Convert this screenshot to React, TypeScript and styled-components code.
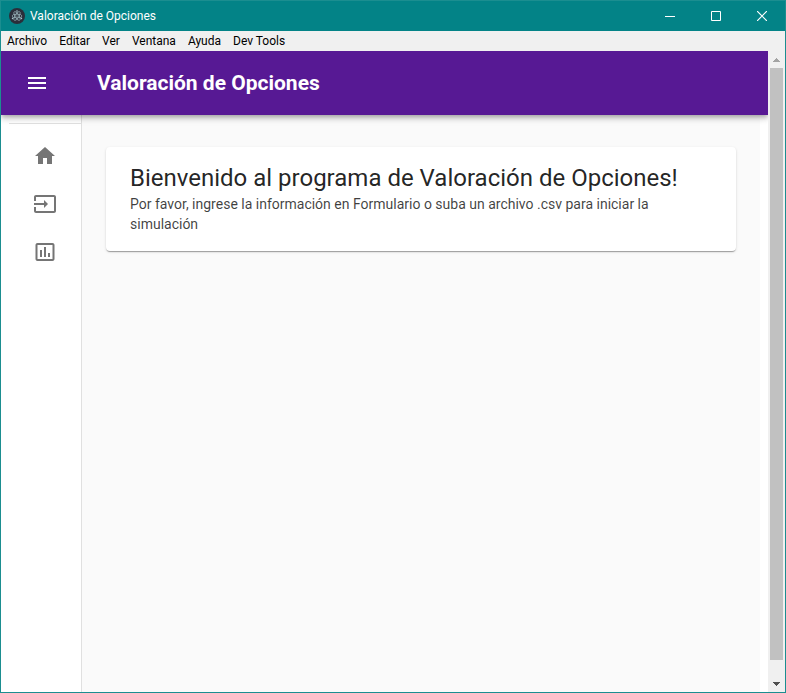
import React from "react";
import styled, { createGlobalStyle } from "styled-components";

const GlobalStyle = createGlobalStyle`
  *, *::before, *::after { box-sizing: border-box; }
  body { margin: 0; font-family: Roboto, sans-serif; }
  button { border: 0; padding: 0; margin: 0; background: transparent; font: inherit; color: inherit; }
`;

const Window = styled.div`
  display: flex;
  flex-direction: column;
  height: 100vh;
  border: 1px solid #1b8e90;
  overflow: hidden;
`;

const TitleBar = styled.header`
  display: flex;
  align-items: center;
  flex: none;
  height: 30px;
  padding-left: 8px;
  background: #038387;
  color: #fff;
  font: 12px/16px Roboto, sans-serif;
`;

const WindowTitle = styled.span`
  flex: 1;
  margin-left: 5px;
`;

const CaptionButton = styled.button`
  display: grid;
  place-items: center;
  width: 46px;
  height: 30px;
`;

const MenuBar = styled.nav`
  display: flex;
  flex: none;
  height: 20px;
  background: #f0f0f0;
  color: #000;
  font: 12px/20px Roboto, sans-serif;
`;

const MenuButton = styled.button`
  padding: 0 6px;
`;

const Viewport = styled.div`
  display: flex;
  flex: 1;
  min-height: 0;
`;

const Page = styled.div`
  display: flex;
  flex-direction: column;
  flex: 1;
  min-width: 0;
  background: #fff;
`;

const AppBar = styled.header`
  display: flex;
  align-items: center;
  flex: none;
  position: relative;
  z-index: 1;
  height: 64px;
  padding: 0 24px;
  gap: 48px;
  background: #571994;
  color: #fff;
  box-shadow: 0 2px 4px -1px rgba(0, 0, 0, 0.2), 0 4px 5px 0 rgba(0, 0, 0, 0.14),
    0 1px 10px 0 rgba(0, 0, 0, 0.12);
  clip-path: inset(0 0 -12px 0);
`;

const IconButton = styled.button`
  display: grid;
  place-items: center;
`;

const AppTitle = styled.h1`
  margin: 0;
  font-size: 21px;
  line-height: 32px;
  font-weight: 700;
`;

const Body = styled.div`
  display: flex;
  flex: 1;
  min-height: 0;
`;

const Drawer = styled.nav`
  flex: none;
  width: 81px;
  padding: 8px 0 0 8px;
  border-right: 1px solid #e0e0e0;
  background: #fff;
`;

const NavList = styled.ul`
  margin: 0;
  padding: 8px 0;
  list-style: none;
  border-top: 1px solid #e0e0e0;
`;

const NavLink = styled.a`
  display: flex;
  align-items: center;
  height: 48px;
  padding-left: 24px;
  color: #757575;
`;

const Main = styled.main`
  flex: 1;
  min-width: 0;
  margin-right: 8px;
  padding: 32px 24px;
  background: #fafafa;
`;

const Card = styled.section`
  padding: 16px 24px 17px;
  border-radius: 4px;
  background: #fff;
  box-shadow: 0 2px 1px -1px rgba(0, 0, 0, 0.2), 0 1px 1px 0 rgba(0, 0, 0, 0.14),
    0 1px 3px 0 rgba(0, 0, 0, 0.12);
`;

const CardTitle = styled.h2`
  margin: 0;
  color: rgba(0, 0, 0, 0.87);
  font-size: 24px;
  line-height: 31px;
  font-weight: 400;
`;

const CardText = styled.p`
  margin: 0;
  color: rgba(0, 0, 0, 0.75);
  font-size: 14px;
  line-height: 20px;
`;

const ScrollBar = styled.div`
  display: flex;
  flex-direction: column;
  flex: none;
  width: 17px;
  background: #f0f0f0;
`;

const ScrollButton = styled.button<{ $color: string }>`
  display: grid;
  place-items: center;
  flex: none;
  height: 17px;
  color: ${(p) => p.$color};
`;

const ScrollTrack = styled.div`
  flex: 1;
  padding: 0 2px 15px;
`;

const ScrollThumb = styled.div`
  height: 100%;
  background: #c1c1c1;
`;

const Glyph = ({ d }: { d: string }) => (
  <svg width="24" height="24" viewBox="0 0 24 24" fill="currentColor" aria-hidden="true">
    <path d={d} />
  </svg>
);

const ElectronLogo = () => (
  <svg width="16" height="16" viewBox="0 0 16 16" aria-hidden="true">
    <circle cx="8" cy="8" r="8" fill="#2b2e3a" />
    <g fill="none" stroke="#a9c6cc" strokeWidth="0.6">
      <ellipse cx="8" cy="8" rx="5" ry="1.9" />
      <ellipse cx="8" cy="8" rx="5" ry="1.9" transform="rotate(60 8 8)" />
      <ellipse cx="8" cy="8" rx="5" ry="1.9" transform="rotate(120 8 8)" />
    </g>
    <g fill="#a9c6cc">
      <circle cx="8" cy="8" r="0.6" />
      <circle cx="3.6" cy="10.4" r="0.8" />
      <circle cx="12.4" cy="10.4" r="0.8" />
      <circle cx="8" cy="3" r="0.8" />
    </g>
  </svg>
);

const menus = ["Archivo", "Editar", "Ver", "Ventana", "Ayuda", "Dev Tools"];

const sections = [
  { label: "Inicio", d: "M10 20v-6h4v6h5v-8h3L12 3 2 12h3v8z" },
  {
    label: "Formulario",
    d: "M21 3.01H3c-1.1 0-2 .9-2 2V9h2V4.99h18v14.03H3V15H1v4.01c0 1.1.9 1.98 2 1.98h18c1.1 0 2-.88 2-1.98v-14c0-1.11-.9-2-2-2zM11 16l4-4-4-4v3H1v2h10v3z",
  },
  {
    label: "Resultados",
    d: "M9 17H7v-7h2v7zm4 0h-2V7h2v10zm4 0h-2v-4h2v4zm2.5 2.1h-15V5h15v14.1zm0-16.1h-15c-1.1 0-2 .9-2 2v14c0 1.1.9 2 2 2h15c1.1 0 2-.9 2-2V5c0-1.1-.9-2-2-2z",
  },
];

export default function App() {
  return (
    <Window>
      <GlobalStyle />
      <TitleBar>
        <ElectronLogo />
        <WindowTitle>Valoración de Opciones</WindowTitle>
        <CaptionButton aria-label="Minimizar">
          <svg width="10" height="10" viewBox="0 0 10 10" stroke="#fff">
            <path d="M0 5.5h10" />
          </svg>
        </CaptionButton>
        <CaptionButton aria-label="Maximizar">
          <svg width="10" height="10" viewBox="0 0 10 10" stroke="#fff" fill="none">
            <path d="M.5.5h9v9h-9z" />
          </svg>
        </CaptionButton>
        <CaptionButton aria-label="Cerrar">
          <svg width="10" height="10" viewBox="0 0 10 10" stroke="#fff" strokeWidth="1.2">
            <path d="M0 0l10 10M10 0L0 10" />
          </svg>
        </CaptionButton>
      </TitleBar>
      <MenuBar>
        {menus.map((m) => (
          <MenuButton key={m}>{m}</MenuButton>
        ))}
      </MenuBar>
      <Viewport>
        <Page>
          <AppBar>
            <IconButton aria-label="Abrir menú">
              <Glyph d="M3 18h18v-2H3v2zm0-5h18v-2H3v2zm0-7v2h18V6H3z" />
            </IconButton>
            <AppTitle>Valoración de Opciones</AppTitle>
          </AppBar>
          <Body>
            <Drawer>
              <NavList>
                {sections.map((s) => (
                  <li key={s.label}>
                    <NavLink href="#" aria-label={s.label}>
                      <Glyph d={s.d} />
                    </NavLink>
                  </li>
                ))}
              </NavList>
            </Drawer>
            <Main>
              <Card>
                <CardTitle>Bienvenido al programa de Valoración de Opciones!</CardTitle>
                <CardText>
                  Por favor, ingrese la información en Formulario o suba un archivo .csv para iniciar
                  la simulación
                </CardText>
              </Card>
            </Main>
          </Body>
        </Page>
        <ScrollBar>
          <ScrollButton $color="#a3a3a3" aria-label="Desplazar hacia arriba">
            <svg width="7" height="4" viewBox="0 0 7 4" fill="currentColor" shapeRendering="crispEdges">
              <path d="M3 0h1v1h1v1h1v1h1v1H0V3h1V2h1V1h1z" />
            </svg>
          </ScrollButton>
          <ScrollTrack>
            <ScrollThumb />
          </ScrollTrack>
          <ScrollButton $color="#505050" aria-label="Desplazar hacia abajo">
            <svg width="7" height="4" viewBox="0 0 7 4" fill="currentColor" shapeRendering="crispEdges">
              <path d="M0 0h7v1H6v1H5v1H4v1H3V3H2V2H1V1H0z" />
            </svg>
          </ScrollButton>
        </ScrollBar>
      </Viewport>
    </Window>
  );
}
